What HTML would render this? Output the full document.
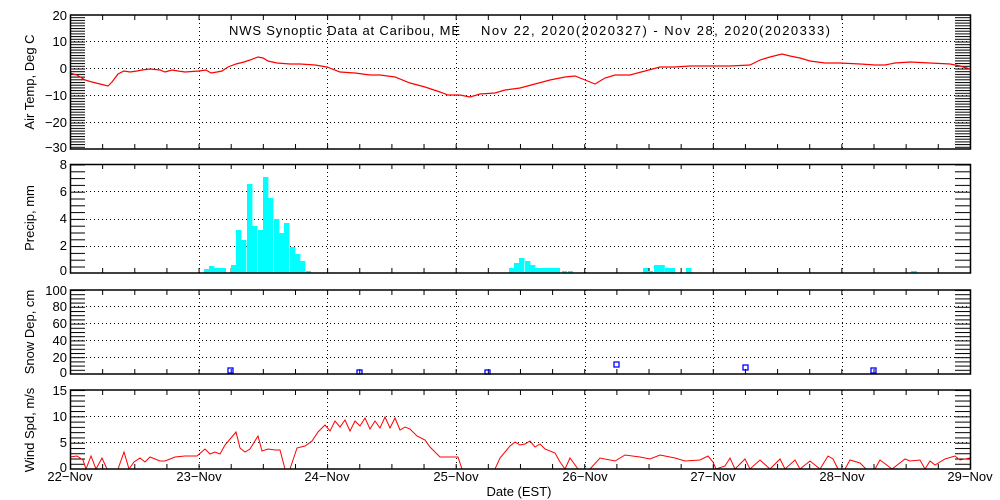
<!DOCTYPE html>
<html><head><meta charset="utf-8"><style>
html,body{margin:0;padding:0;background:#fff}
svg{display:block}
text{font-family:"Liberation Sans",sans-serif;font-size:13px;fill:#000}
</style></head><body>
<svg width="1000" height="500" viewBox="0 0 1000 500" xmlns="http://www.w3.org/2000/svg">
<defs>
<pattern id="t1" x="0" y="14.5" width="20" height="2.7" patternUnits="userSpaceOnUse"><rect x="0" y="0" width="20" height="1" fill="#000"/></pattern>
<pattern id="t2" x="0" y="164.5" width="20" height="6.8" patternUnits="userSpaceOnUse"><rect x="0" y="0" width="20" height="1" fill="#000"/></pattern>
<pattern id="t3" x="0" y="290" width="20" height="4.2" patternUnits="userSpaceOnUse"><rect x="0" y="0" width="20" height="1" fill="#000"/></pattern>
<pattern id="t4" x="0" y="390" width="20" height="5.27" patternUnits="userSpaceOnUse"><rect x="0" y="0" width="20" height="1" fill="#000"/></pattern>
<pattern id="xt" x="70" y="0" width="32.14" height="10" patternUnits="userSpaceOnUse"><rect x="0" y="0" width="1" height="10" fill="#000"/></pattern>
</defs>
<g stroke="#000" stroke-width="1" stroke-dasharray="1,3" fill="none">
<path d="M70 41.5H970M70 68.5H970M70 95.5H970M70 122.5H970"/>
<path d="M70 191.5H970M70 219.5H970M70 246.5H970"/>
<path d="M70 306.5H970M70 323.5H970M70 340.5H970M70 357.5H970"/>
<path d="M70 416.5H970M70 442.5H970"/>
<path d="M199.5 15V149M327.5 15V149M456.5 15V149M585.5 15V149M713.5 15V149M842.5 15V149"/>
<path d="M199.5 164V273M327.5 164V273M456.5 164V273M585.5 164V273M713.5 164V273M842.5 164V273"/>
<path d="M199.5 290V374M327.5 290V374M456.5 290V374M585.5 290V374M713.5 290V374M842.5 290V374"/>
<path d="M199.5 390V469M327.5 390V469M456.5 390V469M585.5 390V469M713.5 390V469M842.5 390V469"/>
</g>
<rect x="71" y="14.5" width="14" height="135" fill="url(#t1)"/>
<rect x="955" y="14.5" width="15" height="135" fill="url(#t1)"/>
<rect x="71" y="164.5" width="14" height="109" fill="url(#t2)"/>
<rect x="955" y="164.5" width="15" height="109" fill="url(#t2)"/>
<rect x="71" y="290" width="14" height="84" fill="url(#t3)"/>
<rect x="955" y="290" width="15" height="84" fill="url(#t3)"/>
<rect x="71" y="390" width="14" height="79" fill="url(#t4)"/>
<rect x="955" y="390" width="15" height="79" fill="url(#t4)"/>
<rect x="70" y="15" width="901" height="5" fill="url(#xt)"/>
<rect x="70" y="144" width="901" height="5" fill="url(#xt)"/>
<rect x="70" y="164" width="901" height="5" fill="url(#xt)"/>
<rect x="70" y="268" width="901" height="5" fill="url(#xt)"/>
<rect x="70" y="290" width="901" height="5" fill="url(#xt)"/>
<rect x="70" y="369" width="901" height="5" fill="url(#xt)"/>
<rect x="70" y="390" width="901" height="5" fill="url(#xt)"/>
<rect x="70" y="464" width="901" height="5" fill="url(#xt)"/>
<g fill="#00ffff">
<rect x="204" y="269" width="5.4" height="4"/><rect x="209" y="266" width="5.4" height="7"/><rect x="214" y="268" width="12" height="5"/>
<rect x="231" y="265" width="5.4" height="8"/><rect x="236" y="230" width="5.4" height="43"/><rect x="241" y="240" width="5.4" height="33"/>
<rect x="247" y="184" width="5.4" height="89"/><rect x="252" y="226" width="5.4" height="47"/><rect x="258" y="230" width="5.4" height="43"/>
<rect x="263" y="177" width="5.4" height="96"/><rect x="268" y="198" width="5.4" height="75"/><rect x="274" y="219" width="5.4" height="54"/>
<rect x="279" y="233" width="5.4" height="40"/><rect x="284" y="223" width="5.4" height="50"/><rect x="290" y="247" width="5.4" height="26"/>
<rect x="295" y="254" width="5.4" height="19"/><rect x="300" y="261" width="5.4" height="12"/><rect x="306" y="271" width="5" height="2"/>
<rect x="509" y="268" width="5.4" height="5"/><rect x="514" y="263" width="5.4" height="10"/><rect x="519" y="258" width="5.4" height="15"/>
<rect x="525" y="261" width="5.4" height="12"/><rect x="530" y="265" width="5.4" height="8"/><rect x="535" y="268" width="25" height="5"/>
<rect x="562" y="271" width="5" height="2"/><rect x="568" y="271" width="5" height="2"/>
<rect x="643" y="268" width="5.4" height="5"/><rect x="648" y="271" width="5" height="2"/><rect x="654" y="265" width="10.8" height="8"/>
<rect x="665" y="268" width="10" height="5"/><rect x="686" y="268" width="5.4" height="5"/><rect x="911" y="271" width="6" height="2"/>
</g>
<polyline fill="none" stroke="#f00" stroke-width="1.2" points="70,73 77,75 85,80 92,82 100,84 108,86 112,82 118,74 124,71 130,72 137,71 142,70 150,69 160,70 165,72 172,70 178,71 185,72 199,71 206,70 211,73 217,72 222,71 228,67 236,64 244,62 250,60 258,57 263,58 268,61 277,63 290,64 300,64 315,65 327,67 340,72 355,73 370,75 380,75 395,77 410,83 425,87 440,92 448,95 460,95 470,97 480,94 495,93 505,90 520,88 535,84 550,80 565,77 575,76 585,80 595,84 605,78 615,75 630,75 645,71 660,67 675,67 690,66 710,66 730,66 750,65 760,60 770,57 782,54 790,56 800,58 810,61 825,63 840,63 860,64 875,65 885,65 895,63 910,62 930,63 950,64 960,66 970,69"/>
<polyline fill="none" stroke="#f00" stroke-width="1" points="70,457 77,456 83,460 86,469 91,456 96,469 102,458 107,469 118,469 124,452 129,469 134,462 140,458 145,462 150,457 160,461 165,461 175,457 185,456 197,456 205,449 210,454 215,452 220,454 225,445 236,432 240,448 245,452 250,449 258,436 262,451 268,449 275,450 280,450 285,469 290,469 297,448 305,446 312,441 318,432 325,425 330,431 335,421 340,427 345,420 350,431 355,421 360,426 365,418 370,429 375,421 380,428 385,417 390,428 395,418 400,430 405,427 410,429 417,436 425,440 430,447 440,457 445,457 458,457 462,469 495,469 500,458 510,446 515,442 520,445 525,444 530,441 535,447 540,444 545,449 555,453 560,462 565,469 570,458 578,469 590,469 600,458 615,461 625,455 640,457 650,459 660,455 675,458 685,461 700,460 708,456 713,462 716,469 725,466 730,458 735,469 745,459 750,469 760,460 770,469 780,459 785,469 795,460 800,469 810,461 820,469 828,456 833,459 838,469 845,469 850,460 860,463 866,469 875,469 880,460 892,469 905,459 910,461 920,460 925,469 930,461 935,465 945,459 955,456 960,460 970,458"/>
<g fill="none" stroke="#00f" stroke-width="1.3">
<rect x="228" y="368" width="5" height="5"/><rect x="357" y="370" width="5" height="4"/><rect x="485" y="370" width="5" height="4"/>
<rect x="614" y="362" width="5" height="5"/><rect x="743" y="365" width="5" height="5"/><rect x="871" y="368" width="5" height="5"/>
</g>
<g fill="none" stroke="#000" stroke-width="1.5">
<rect x="70.5" y="15" width="900" height="134"/>
<rect x="70.5" y="164.5" width="900" height="108.5"/>
<rect x="70.5" y="290" width="900" height="84"/>
<rect x="70.5" y="390" width="900" height="79"/>
</g>
<g text-anchor="end">
<text x="67" y="20">20</text><text x="67" y="46">10</text><text x="67" y="73">0</text><text x="67" y="100">−10</text><text x="67" y="127">−20</text><text x="67" y="152">−30</text>
<text x="67" y="169">8</text><text x="67" y="196">6</text><text x="67" y="223">4</text><text x="67" y="250">2</text><text x="67" y="275">0</text>
<text x="67" y="295">100</text><text x="67" y="311">80</text><text x="67" y="328">60</text><text x="67" y="345">40</text><text x="67" y="362">20</text><text x="67" y="377">0</text>
<text x="67" y="395">15</text><text x="67" y="421">10</text><text x="67" y="447">5</text><text x="67" y="472">0</text>
</g>
<g>
<text transform="translate(34,82) rotate(-90)" text-anchor="middle">Air Temp, Deg C</text>
<text transform="translate(34,218) rotate(-90)" text-anchor="middle">Precip, mm</text>
<text transform="translate(34,332) rotate(-90)" text-anchor="middle">Snow Dep, cm</text>
<text transform="translate(34,430) rotate(-90)" text-anchor="middle">Wind Spd, m/s</text>
</g>
<text x="229" y="35" textLength="231" lengthAdjust="spacing">NWS Synoptic Data at Caribou, ME</text>
<text x="481" y="35" textLength="349" lengthAdjust="spacing">Nov 22, 2020(2020327) - Nov 28, 2020(2020333)</text>
<g text-anchor="middle">
<text x="70" y="481">22−Nov</text><text x="199" y="481">23−Nov</text><text x="327" y="481">24−Nov</text><text x="456" y="481">25−Nov</text>
<text x="585" y="481">26−Nov</text><text x="713" y="481">27−Nov</text><text x="842" y="481">28−Nov</text><text x="970" y="481">29−Nov</text>
<text x="519" y="496">Date (EST)</text>
</g>
</svg>
</body></html>
